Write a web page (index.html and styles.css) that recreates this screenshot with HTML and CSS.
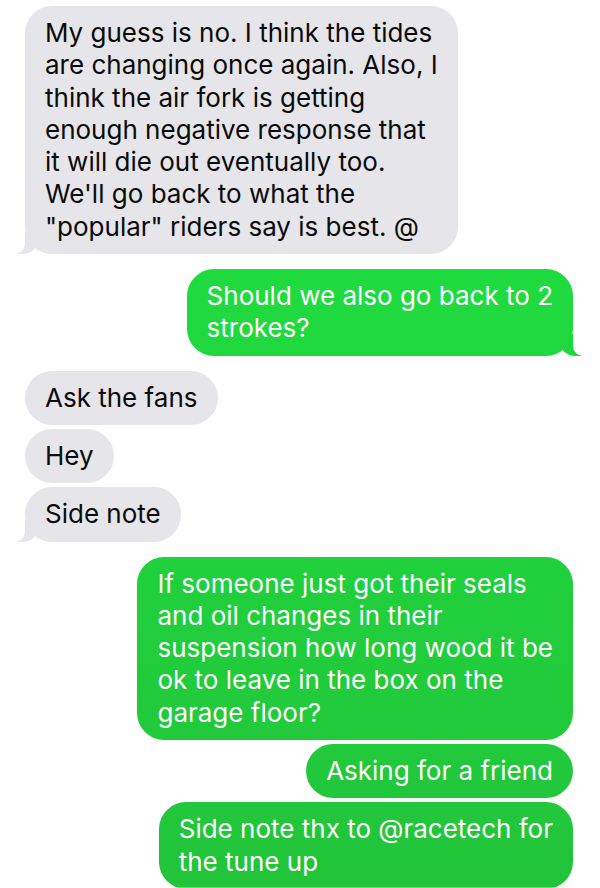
FILE: index.html
```html
<!DOCTYPE html>
<html>
<head>
    <meta charset="UTF-8">
    <title>Messages</title>
    <link rel="stylesheet" href="styles.css">
</head>
<body>
<div class="chat">
    <div class="group in">
        <div class="bubble tail">My guess is no. I think the tides<br>are changing once again. Also, I<br>think the air fork is getting<br>enough negative response that<br>it will die out eventually too.<br>We'll go back to what the<br>"popular" riders say is best. @</div>
    </div>
    <div class="group out">
        <div class="bubble tail">Should we also go back to 2<br>strokes?</div>
    </div>
    <div class="group in">
        <div class="bubble">Ask the fans</div>
        <div class="bubble">Hey</div>
        <div class="bubble tail">Side note</div>
    </div>
    <div class="group out">
        <div class="bubble">If someone just got their seals<br>and oil changes in their<br>suspension how long wood it be<br>ok to leave in the box on the<br>garage floor?</div>
        <div class="bubble">Asking for a friend</div>
        <div class="bubble">Side note thx to @racetech for<br>the tune up</div>
    </div>
</div>
</body>
</html>
```

FILE: styles.css
```css
* {
    margin: 0;
    padding: 0;
    box-sizing: border-box;
}

body {
    background: #fff;
    font-family: Inter, "Liberation Sans", sans-serif;
    font-size: 26px;
    line-height: 32.3px;
    overflow: hidden;
}

.chat {
    display: flex;
    flex-direction: column;
    gap: 15px;
    padding: 6px 27px 0 25px;
}

.group {
    display: flex;
    flex-direction: column;
    gap: 4px;
}

.group.in {
    align-items: flex-start;
}

.group.out {
    align-items: flex-end;
}

.bubble {
    position: relative;
    padding: 11px 20px;
    border-radius: 27px;
    white-space: nowrap;
}

.in .bubble {
    background: #e5e5ea;
    color: #0b0b0b;
}

.out .bubble,
.out .bubble.tail:before {
    background: linear-gradient(#1fe641 0, #20d63e 400px, #22c43a 888px) fixed;
}

.out .bubble {
    color: #fff;
}

/*小尾巴*/
.bubble.tail:before,
.bubble.tail:after {
    content: "";
    position: absolute;
    bottom: 0;
    height: 22px;
}

.in .bubble.tail:before {
    left: -8px;
    width: 22px;
    background: #e5e5ea;
    border-bottom-right-radius: 16px;
}

.in .bubble.tail:after {
    left: -10px;
    width: 10px;
    background: #fff;
    border-bottom-right-radius: 10px;
}

.out .bubble.tail:before {
    right: -8px;
    width: 22px;
    border-bottom-left-radius: 16px;
}

.out .bubble.tail:after {
    right: -10px;
    width: 10px;
    background: #fff;
    border-bottom-left-radius: 10px;
}
```
